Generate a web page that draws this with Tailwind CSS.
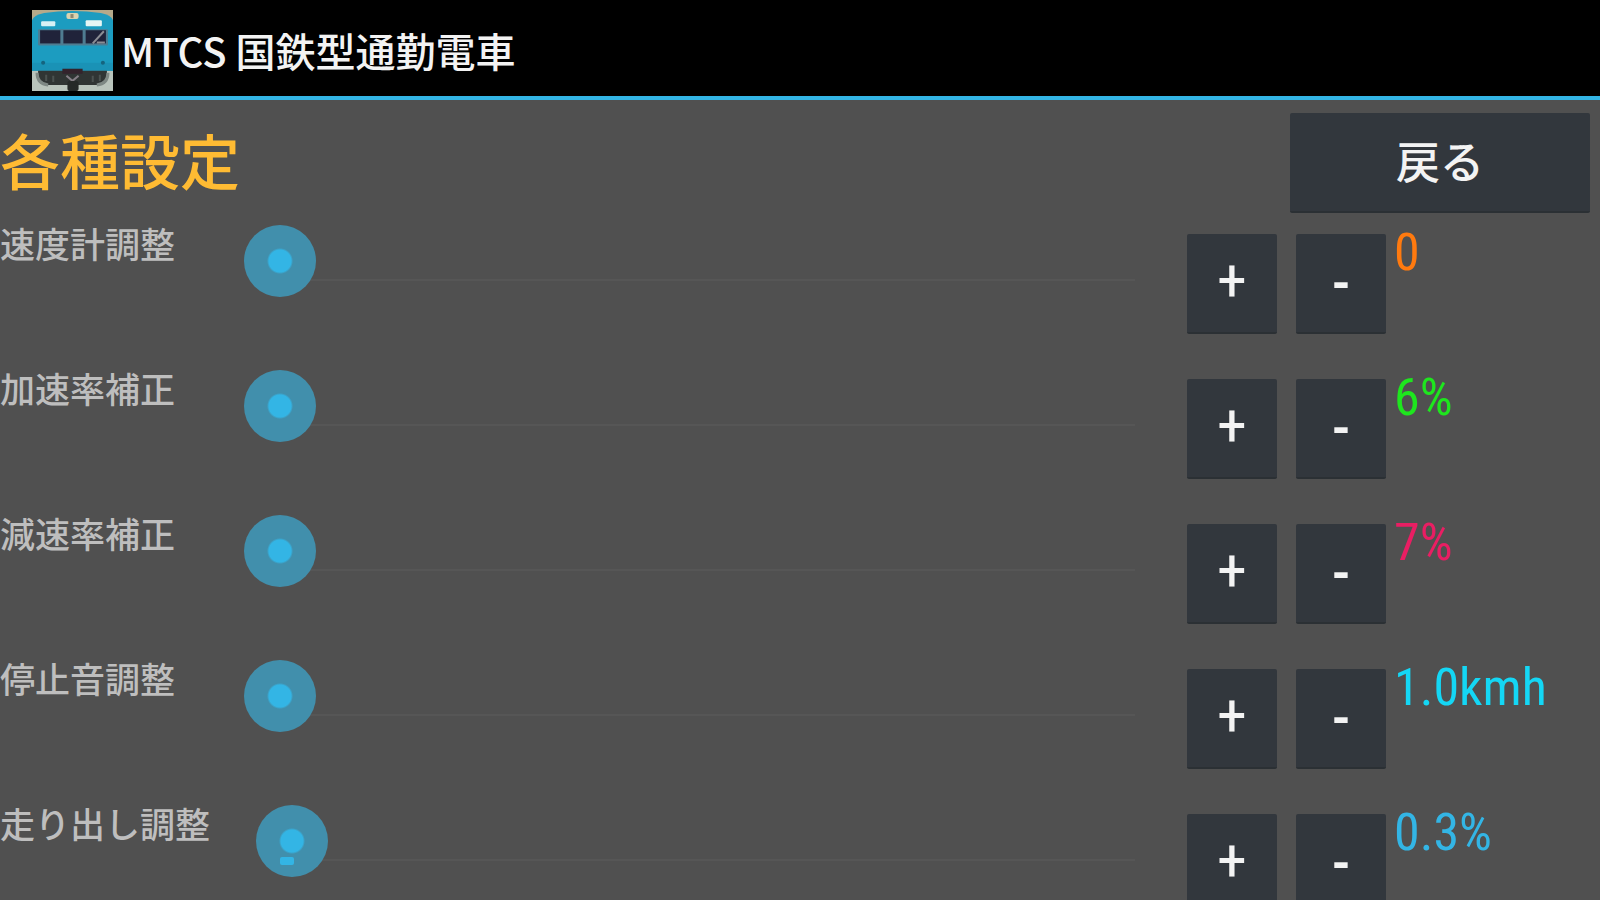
<!doctype html>
<html lang="ja">
<head>
  <meta charset="UTF-8" />
  <meta name="viewport" content="width=device-width, initial-scale=1.0" />
  <title>MTCS 国鉄型通勤電車</title>
  <script src="https://cdn.jsdelivr.net/npm/@tailwindcss/browser@4"></script>
</head>
<body class="h-screen overflow-hidden bg-[#505050] font-['Noto_Sans_CJK_JP',sans-serif] font-medium text-[#bebebe]">

  <!-- Action bar -->
  <header class="flex h-[100px] items-center border-b-4 border-[#33b5e5] bg-black pl-8 pt-1">
    <svg class="h-[81px] w-[81px] shrink-0" viewBox="0 0 80 80" aria-hidden="true">
      <rect width="80" height="80" fill="#b9c4bc" />
      <rect width="80" height="14" fill="#b5a98a" />
      <path d="M0 60V10Q2 5 12 3Q40 -1 68 3Q78 5 80 10V60Z" fill="#1c9cc0" />
      <path d="M0 52H80V60H0Z" fill="#1a92b6" />
      <rect x="34" y="3" width="12" height="6" rx="2" fill="#d9d3b0" />
      <rect x="38" y="4" width="3" height="4" fill="#8f8a72" />
      <rect x="9" y="11" width="14" height="5" rx="1" fill="#d8f1f5" />
      <rect x="53" y="10" width="16" height="6" rx="1" fill="#e6f6f4" />
      <rect x="6" y="19" width="69" height="16" rx="1" fill="#4f7c91" />
      <rect x="8" y="20" width="20" height="13" fill="#20233a" />
      <rect x="31" y="20" width="19" height="13" fill="#20233a" />
      <rect x="53" y="20" width="20" height="13" fill="#20233a" />
      <path d="M60 33L71 21M64 32H72" stroke="#8b8d94" stroke-width="2" />
      <circle cx="11" cy="52" r="2" fill="#15647f" />
      <circle cx="70" cy="52" r="2" fill="#15647f" />
      <path d="M6 60H74V68Q74 74 66 74H14Q6 74 6 68Z" fill="#303534" />
      <path d="M30 58H50V63H30Z" fill="#33232c" />
      <path d="M5 62Q5 73 16 74M75 62Q75 73 64 74" fill="none" stroke="#7e8884" stroke-width="3" />
      <path d="M14 64V70M21 65V71M60 65V71M67 64V70" stroke="#4b5250" stroke-width="2" />
      <path d="M34 65L40 70L46 65" fill="none" stroke="#857e86" stroke-width="2" />
      <rect x="35" y="70" width="11" height="10" rx="2" fill="#252928" />
    </svg>
    <span class="ml-2 text-[40px] leading-[48px] text-[#f3f3f3]">MTCS 国鉄型通勤電車</span>
  </header>

  <main>
    <div class="flex h-[123px] items-start justify-between pr-[10px] pt-[13px]">
      <h1 class="pt-[14px] text-[60px] leading-[64px] text-[#ffbb33]">各種設定</h1>
      <button type="button" class="h-[100px] w-[300px] rounded-xs border-b-2 border-[#2b3034] bg-[#32373d] pb-1 text-[44px] leading-[48px] text-[#f3f3f3]">戻る</button>
    </div>

    <!-- Speedometer -->
    <div class="flex h-[145px] items-start">
      <label for="speedometer" class="w-[244px] shrink-0 text-[35px] leading-[40px]">速度計調整</label>
      <div class="relative min-w-0 flex-1 pt-[2px]">
        <input id="speedometer" type="range" min="0" max="200" value="0" class="block h-[72px] w-full appearance-none bg-[linear-gradient(#565656,#565656)] bg-size-[calc(100%-60px)_2px] bg-position-[100%_54px] bg-no-repeat [&::-webkit-slider-thumb]:h-[72px] [&::-webkit-slider-thumb]:w-[72px] [&::-webkit-slider-thumb]:appearance-none [&::-webkit-slider-thumb]:rounded-full [&::-webkit-slider-thumb]:bg-[radial-gradient(circle,#33b5e5_11px,#418fac_13px)]" />
      </div>
      <div class="ml-[52px] flex gap-[19px] pt-[11px] font-['Roboto_Condensed','Noto_Sans_CJK_JP',sans-serif] text-[60px] leading-[56px] text-[#f3f3f3]">
        <button type="button" aria-label="速度計調整を上げる" class="h-[100px] w-[90px] rounded-xs border-b-2 border-[#2b3034] bg-[#32373d] pb-1 font-normal">+</button>
        <button type="button" aria-label="速度計調整を下げる" class="h-[100px] w-[90px] rounded-xs border-b-2 border-[#2b3034] bg-[#32373d]">-</button>
      </div>
      <output for="speedometer" class="ml-2 w-[206px] shrink-0 font-['Roboto_Condensed','Noto_Sans_CJK_JP',sans-serif] text-[52px] font-normal leading-[60px] text-[#ff7a0f]">0</output>
    </div>

    <!-- Acceleration -->
    <div class="flex h-[145px] items-start">
      <label for="acceleration" class="w-[244px] shrink-0 text-[35px] leading-[40px]">加速率補正</label>
      <div class="relative min-w-0 flex-1 pt-[2px]">
        <input id="acceleration" type="range" min="0" max="200" value="0" class="block h-[72px] w-full appearance-none bg-[linear-gradient(#565656,#565656)] bg-size-[calc(100%-60px)_2px] bg-position-[100%_54px] bg-no-repeat [&::-webkit-slider-thumb]:h-[72px] [&::-webkit-slider-thumb]:w-[72px] [&::-webkit-slider-thumb]:appearance-none [&::-webkit-slider-thumb]:rounded-full [&::-webkit-slider-thumb]:bg-[radial-gradient(circle,#33b5e5_11px,#418fac_13px)]" />
      </div>
      <div class="ml-[52px] flex gap-[19px] pt-[11px] font-['Roboto_Condensed','Noto_Sans_CJK_JP',sans-serif] text-[60px] leading-[56px] text-[#f3f3f3]">
        <button type="button" aria-label="加速率補正を上げる" class="h-[100px] w-[90px] rounded-xs border-b-2 border-[#2b3034] bg-[#32373d] pb-1 font-normal">+</button>
        <button type="button" aria-label="加速率補正を下げる" class="h-[100px] w-[90px] rounded-xs border-b-2 border-[#2b3034] bg-[#32373d]">-</button>
      </div>
      <output for="acceleration" class="ml-2 w-[206px] shrink-0 font-['Roboto_Condensed','Noto_Sans_CJK_JP',sans-serif] text-[52px] font-normal leading-[60px] text-[#1ee61e]">6%</output>
    </div>

    <!-- Deceleration -->
    <div class="flex h-[145px] items-start">
      <label for="deceleration" class="w-[244px] shrink-0 text-[35px] leading-[40px]">減速率補正</label>
      <div class="relative min-w-0 flex-1 pt-[2px]">
        <input id="deceleration" type="range" min="0" max="200" value="0" class="block h-[72px] w-full appearance-none bg-[linear-gradient(#565656,#565656)] bg-size-[calc(100%-60px)_2px] bg-position-[100%_54px] bg-no-repeat [&::-webkit-slider-thumb]:h-[72px] [&::-webkit-slider-thumb]:w-[72px] [&::-webkit-slider-thumb]:appearance-none [&::-webkit-slider-thumb]:rounded-full [&::-webkit-slider-thumb]:bg-[radial-gradient(circle,#33b5e5_11px,#418fac_13px)]" />
      </div>
      <div class="ml-[52px] flex gap-[19px] pt-[11px] font-['Roboto_Condensed','Noto_Sans_CJK_JP',sans-serif] text-[60px] leading-[56px] text-[#f3f3f3]">
        <button type="button" aria-label="減速率補正を上げる" class="h-[100px] w-[90px] rounded-xs border-b-2 border-[#2b3034] bg-[#32373d] pb-1 font-normal">+</button>
        <button type="button" aria-label="減速率補正を下げる" class="h-[100px] w-[90px] rounded-xs border-b-2 border-[#2b3034] bg-[#32373d]">-</button>
      </div>
      <output for="deceleration" class="ml-2 w-[206px] shrink-0 font-['Roboto_Condensed','Noto_Sans_CJK_JP',sans-serif] text-[52px] font-normal leading-[60px] text-[#e91e63]">7%</output>
    </div>

    <!-- Stopping sound -->
    <div class="flex h-[145px] items-start">
      <label for="stop-sound" class="w-[244px] shrink-0 text-[35px] leading-[40px]">停止音調整</label>
      <div class="relative min-w-0 flex-1 pt-[2px]">
        <input id="stop-sound" type="range" min="0" max="200" value="0" class="block h-[72px] w-full appearance-none bg-[linear-gradient(#565656,#565656)] bg-size-[calc(100%-60px)_2px] bg-position-[100%_54px] bg-no-repeat [&::-webkit-slider-thumb]:h-[72px] [&::-webkit-slider-thumb]:w-[72px] [&::-webkit-slider-thumb]:appearance-none [&::-webkit-slider-thumb]:rounded-full [&::-webkit-slider-thumb]:bg-[radial-gradient(circle,#33b5e5_11px,#418fac_13px)]" />
      </div>
      <div class="ml-[52px] flex gap-[19px] pt-[11px] font-['Roboto_Condensed','Noto_Sans_CJK_JP',sans-serif] text-[60px] leading-[56px] text-[#f3f3f3]">
        <button type="button" aria-label="停止音調整を上げる" class="h-[100px] w-[90px] rounded-xs border-b-2 border-[#2b3034] bg-[#32373d] pb-1 font-normal">+</button>
        <button type="button" aria-label="停止音調整を下げる" class="h-[100px] w-[90px] rounded-xs border-b-2 border-[#2b3034] bg-[#32373d]">-</button>
      </div>
      <output for="stop-sound" class="ml-2 w-[206px] shrink-0 font-['Roboto_Condensed','Noto_Sans_CJK_JP',sans-serif] text-[52px] font-normal leading-[60px] text-[#14d7f5]">1.0kmh</output>
    </div>

    <!-- Starting -->
    <div class="flex h-[145px] items-start">
      <label for="start" class="w-[244px] shrink-0 text-[35px] leading-[40px]">走り出し調整</label>
      <div class="relative min-w-0 flex-1 pt-[2px]">
        <input id="start" type="range" min="0" max="200" value="3" class="block h-[72px] w-full appearance-none bg-[linear-gradient(#565656,#565656)] bg-size-[calc(100%-60px)_2px] bg-position-[100%_54px] bg-no-repeat [&::-webkit-slider-thumb]:h-[72px] [&::-webkit-slider-thumb]:w-[72px] [&::-webkit-slider-thumb]:appearance-none [&::-webkit-slider-thumb]:rounded-full [&::-webkit-slider-thumb]:bg-[radial-gradient(circle,#33b5e5_11px,#418fac_13px)]" />
        <!-- Filled part of the track, seen through the thumb -->
        <span class="pointer-events-none absolute left-9 top-[54px] h-2 w-[14px] rounded-xs bg-[#33b5e5]"></span>
      </div>
      <div class="ml-[52px] flex gap-[19px] pt-[11px] font-['Roboto_Condensed','Noto_Sans_CJK_JP',sans-serif] text-[60px] leading-[56px] text-[#f3f3f3]">
        <button type="button" aria-label="走り出し調整を上げる" class="h-[100px] w-[90px] rounded-xs border-b-2 border-[#2b3034] bg-[#32373d] pb-1 font-normal">+</button>
        <button type="button" aria-label="走り出し調整を下げる" class="h-[100px] w-[90px] rounded-xs border-b-2 border-[#2b3034] bg-[#32373d]">-</button>
      </div>
      <output for="start" class="ml-2 w-[206px] shrink-0 font-['Roboto_Condensed','Noto_Sans_CJK_JP',sans-serif] text-[52px] font-normal leading-[60px] text-[#33b5e5]">0.3%</output>
    </div>
  </main>

</body>
</html>
